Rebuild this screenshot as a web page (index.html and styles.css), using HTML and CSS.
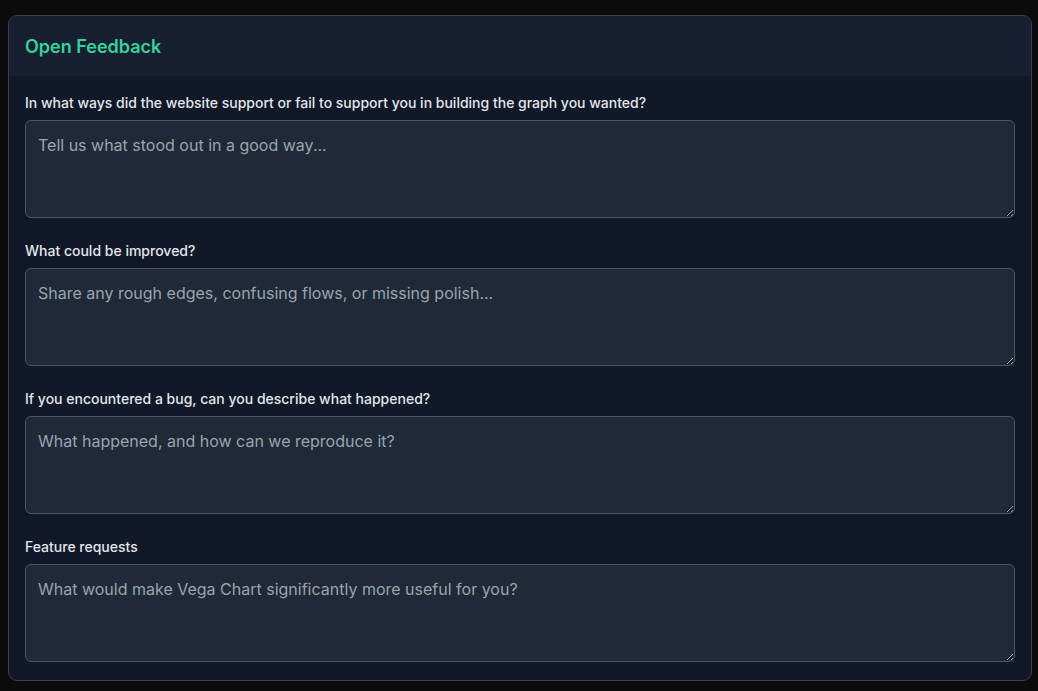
FILE: index.html
```html
<!DOCTYPE html>
<html lang="en">
<head>
<meta charset="utf-8">
<title>Open Feedback</title>
<link rel="stylesheet" href="styles.css">
</head>
<body>
<section class="card">
  <header class="card-header">
    <h2 class="card-title">Open Feedback</h2>
  </header>
  <div class="card-body">
    <div class="field">
      <label class="field-label" for="q1">In what ways did the website support or fail to support you in building the graph you wanted?</label>
      <textarea id="q1" class="field-input" placeholder="Tell us what stood out in a good way..."></textarea>
    </div>
    <div class="field">
      <label class="field-label" for="q2">What could be improved?</label>
      <textarea id="q2" class="field-input" placeholder="Share any rough edges, confusing flows, or missing polish..."></textarea>
    </div>
    <div class="field">
      <label class="field-label" for="q3">If you encountered a bug, can you describe what happened?</label>
      <textarea id="q3" class="field-input" placeholder="What happened, and how can we reproduce it?"></textarea>
    </div>
    <div class="field">
      <label class="field-label" for="q4">Feature requests</label>
      <textarea id="q4" class="field-input" placeholder="What would make Vega Chart significantly more useful for you?"></textarea>
    </div>
  </div>
</section>
</body>
</html>
```
FILE: styles.css
```css
html, body {
  background: #0b0b0c;
}
body {
  margin: 0;
  padding: 15px 6px 0 8px;
  font-family: Inter, "Noto Sans", sans-serif;
}
.card {
  border: 1px solid #3a4150;
  border-radius: 9px;
  background: #111827;
  overflow: hidden;
}
.card-header {
  background: #172031;
  padding: 19px 16px 17px;
}
.card-title {
  margin: 0;
  font-size: 18px;
  line-height: 24px;
  font-weight: 600;
  color: #34d399;
}
.card-body {
  padding: 17px 16px 18px;
  display: flex;
  flex-direction: column;
  gap: 23px;
}
.field {
  display: flex;
  flex-direction: column;
  gap: 7px;
}
.field-label {
  font-size: 14px;
  line-height: 20px;
  font-weight: 500;
  color: #e2e6ec;
}
.field-input {
  box-sizing: border-box;
  width: 100%;
  height: 98px;
  margin: 0;
  padding: 12px 12px;
  background: #1f2937;
  border: 1px solid #4b5563;
  border-radius: 6px;
  color: #e5e7eb;
  font-family: Inter, "Noto Sans", sans-serif;
  font-size: 16px;
  line-height: 24px;
  resize: vertical;
  outline: none;
}
.field-input::placeholder {
  color: #9ca3af;
  opacity: 1;
}
```
